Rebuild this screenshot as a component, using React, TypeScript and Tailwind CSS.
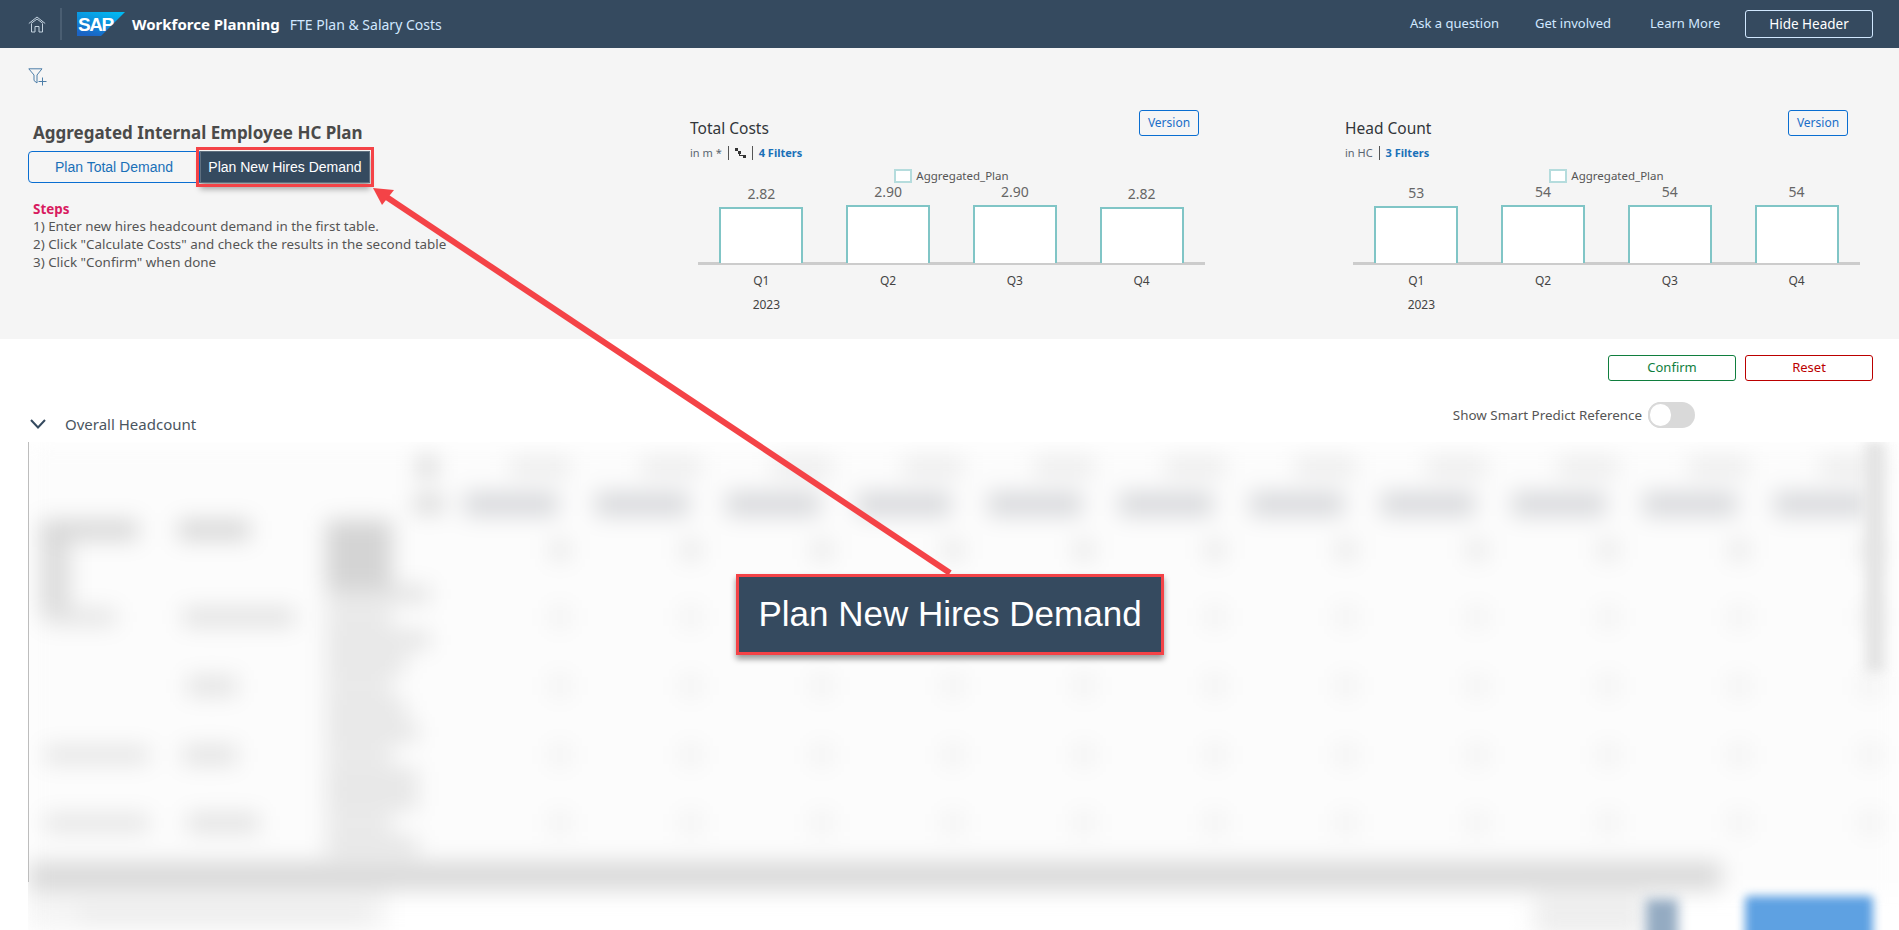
import React from "react";

const sans = "font-['Noto_Sans',sans-serif]";

function HomeIcon() {
  return (
    <svg width="18" height="17" viewBox="0 0 18 17" fill="none" stroke="#c3d2df" strokeWidth="1">
      <path d="M0.8 7.5 L9 1 L17.2 7.5" />
      <path d="M3 7.5 L9 3 L15 7.5" />
      <path d="M3.5 8 V16 H7 V10.5 H11 V16 H14.5 V8" />
    </svg>
  );
}

function SapLogo() {
  return (
    <svg width="48" height="24" viewBox="0 0 48 24">
      <defs>
        <linearGradient id="sapg" x1="0.3" y1="1" x2="0.8" y2="0">
          <stop offset="0" stopColor="#1b63c4" />
          <stop offset="1" stopColor="#00b9f2" />
        </linearGradient>
      </defs>
      <polygon points="0,0 48,0 24,24 0,24" fill="url(#sapg)" />
      <text x="1" y="19" fill="#fff" fontFamily="Liberation Sans, sans-serif" fontWeight="700" fontSize="19" letterSpacing="-1.4">
        SAP
      </text>
    </svg>
  );
}

function FilterPlus() {
  return (
    <svg width="21" height="18" viewBox="0 0 21 18" fill="none" stroke="#4d7ea8" strokeWidth="1">
      <path d="M0.8 0.8 H14 L9 7 V15 L6 12.5 V7 Z" />
      <path d="M14.5 9.5 V17.5 M10.5 13.5 H18.5" />
    </svg>
  );
}

function Hier() {
  return (
    <svg width="11" height="11" viewBox="0 0 11 11" fill="#333">
      <rect x="0" y="0" width="3" height="3" />
      <rect x="3" y="3" width="3" height="3" />
      <rect x="8" y="7" width="3" height="3" />
      <rect x="4" y="6" width="1" height="2" />
      <rect x="4" y="7" width="4" height="1" />
    </svg>
  );
}

function Chart({ title, sub, filters, hier, values, tops, wide }: { title: string; sub: string; filters: string; hier: boolean; values: string[]; tops: number[]; wide: boolean }) {
  return (
    <div className="flex flex-col">
      <div className={`flex justify-between items-start ${wide ? "w-[509px]" : "w-[503px]"}`}>
        <div className="flex flex-col">
          <div className="text-[15.5px] leading-[20px] mt-[8px] text-[#32363a]">{title}</div>
          <div className="flex items-center h-[14px] mt-[8px] text-[11px] text-[#5a6570]">
            <span>{sub}</span>
            {hier && (
              <>
                <span className="w-px h-[14px] bg-[#555] mx-[6px]" />
                <Hier />
              </>
            )}
            <span className="w-px h-[14px] bg-[#555] mx-[6px]" />
            <span className="font-bold text-[#1a70b8] text-[11px]">{filters}</span>
          </div>
        </div>
        <button className="w-[60px] h-[26px] border border-[#0a6ed1] rounded-[3px] text-[12px] text-[#1a6ec8] bg-transparent">Version</button>
      </div>
      <div className="ml-[8px] w-[507px]">
        <div className="flex justify-center items-center h-[14px] mt-[9px] gap-[4px] text-[11.5px] text-[#555]">
          <span className="w-[18px] h-[14px] border-2 border-[#b5dcdd] bg-white" />
          <span>Aggregated_Plan</span>
        </div>
        <div className="grid grid-cols-4 h-[82px] border-b-[3px] border-[#cccccc] items-end">
          {values.map((v, i) => (
            <div key={i} className="flex flex-col items-center">
              <span className="text-[14px] leading-[18px] mb-[4px] text-[#666]">{v}</span>
              <div className="w-[84px] border-2 border-b-0 border-[#80c5c6] bg-white" style={{ height: tops[i] }} />
            </div>
          ))}
        </div>
        <div className="grid grid-cols-4 mt-[8px] text-[12px] leading-[16px] text-[#444]">
          {["Q1", "Q2", "Q3", "Q4"].map((q) => (
            <div key={q} className="text-center">{q}</div>
          ))}
        </div>
        <div className="grid grid-cols-4 mt-[8px] text-[12px] leading-[16px] text-[#444]">
          <div className="text-center pl-[10px]">2023</div>
        </div>
      </div>
    </div>
  );
}

const pillCols = Array.from({ length: 11 });
const rows = [
  { h: 70, aw: 72, al: 16, bw: 112, bl: 5, cw: 104 },
  { h: 68, aw: 0, al: 16, bw: 50, bl: 9, cw: 80 },
  { h: 69, aw: 105, al: 16, bw: 54, bl: 5, cw: 92 },
  { h: 68, aw: 105, al: 16, bw: 72, bl: 9, cw: 92 },
];

function BlurredTable() {
  return (
    <div className="ml-[28px] relative h-[488px] overflow-hidden">
      <div className="blur-[11px] h-full bg-[#fcfcfc] flex flex-col">
        <div className="flex pl-[390px] h-[50px] items-center">
          <div className="w-[18px] h-[22px] bg-[#d6d6d6]" />
          <div className="flex gap-[71px] ml-[74px]">
            {pillCols.map((_, i) => (
              <div key={i} className="w-[60px] h-[18px] bg-[#ebebeb]" />
            ))}
          </div>
        </div>
        <div className="flex pl-[386px] h-[24px] items-center">
          <div className="w-[30px] h-[18px] bg-[#d8d8d8]" />
          <div className="flex gap-[37px] ml-[20px]">
            {pillCols.map((_, i) => (
              <div key={i} className="w-[94px] h-[24px] bg-[#d8d9dc]" />
            ))}
          </div>
        </div>
        <div className="flex h-[66px] pt-[4px]">
          <div className="w-[150px] pl-[12px] flex flex-col">
            <div className="w-[98px] h-[20px] bg-[#d6d6d6] shrink-0" />
            <div className="w-[30px] h-[76px] bg-[#dcdcdc] shrink-0" />
          </div>
          <div className="w-[146px] pl-[0px]">
            <div className="w-[72px] h-[20px] bg-[#d6d6d6]" />
          </div>
          <div className="w-[110px] pl-[2px]">
            <div className="w-[66px] h-[76px] bg-[#d4d4d4]" />
          </div>
          <div className="flex pl-[40px] gap-[35px] pt-[20px]">
            {pillCols.map((_, i) => (
              <div key={i} className="w-[96px] flex justify-end">
                <div className="w-[20px] h-[20px] bg-[#e8e8e8]" />
              </div>
            ))}
          </div>
        </div>
        {rows.map((r, k) => (
          <div key={k} className="flex items-center" style={{ height: r.h }}>
            <div className="w-[150px]" style={{ paddingLeft: r.al }}>
              <div className="h-[16px] bg-[#e2e2e2]" style={{ width: r.aw }} />
            </div>
            <div className="w-[146px]" style={{ paddingLeft: r.bl }}>
              <div className="h-[18px] bg-[#e0e0e0]" style={{ width: r.bw }} />
            </div>
            <div className="w-[110px] h-full flex flex-col justify-around pl-[2px]">
              <div className="h-[16px] bg-[#e0e0e0]" style={{ width: r.cw }} />
              <div className="w-[66px] h-[16px] bg-[#e2e2e2]" />
              <div className="h-[16px] bg-[#e0e0e0]" style={{ width: r.cw }} />
            </div>
            <div className="flex pl-[40px] gap-[35px]">
              {pillCols.map((_, i) => (
                <div key={i} className="w-[96px] flex justify-end">
                  <div className="w-[20px] h-[20px] bg-[#f0f0f0]" />
                </div>
              ))}
            </div>
          </div>
        ))}
        <div className="w-[1693px] h-[28px] bg-[#d8d8d8] mt-[5px]" />
        <div className="flex h-[40px] bg-white">
          <div className="w-[360px] h-full bg-[#f5f5f5] pt-[18px] pl-[50px]">
            <div className="w-[290px] h-[12px] bg-[#e8e8e8]" />
          </div>
          <div className="ml-[1146px] w-[112px] h-full mt-[6px] bg-[#eeeeee]" />
        </div>
      </div>
      <div className="absolute left-[1837px] top-0 w-[20px] h-[230px] bg-[#e4e4e4] blur-[6px]" />
      <div className="absolute left-[1618px] top-[457px] w-[32px] h-[50px] bg-[#94abc2] blur-[6px]" />
      <div className="absolute left-[1717px] top-[454px] w-[128px] h-[50px] bg-[#5ea1e2] rounded-[4px] blur-[5px]" />
      <div className="absolute left-0 top-0 w-px h-[440px] bg-[#bdbdbd]" />
    </div>
  );
}

export default function App() {
  return (
    <div className={`relative w-[1899px] h-[930px] overflow-hidden bg-white ${sans}`}>
      <header className="h-[48px] bg-[#354a5f] flex items-center pl-[28px] pr-[26px]">
        <HomeIcon />
        <div className="w-[2px] h-[32px] bg-[#4a5e72] ml-[14px] mr-[15px]" />
        <SapLogo />
        <span className="ml-[7px] text-[15px] font-bold text-white">Workforce Planning</span>
        <span className="ml-[10px] text-[14px] text-[#d1e8ff]">FTE Plan &amp; Salary Costs</span>
        <div className="ml-auto flex items-center text-[13px] text-[#d1e8ff]">
          <span className="w-[90px] whitespace-nowrap">Ask a question</span>
          <span className="ml-[35px] w-[77px] whitespace-nowrap">Get involved</span>
          <span className="ml-[38px] w-[70px] whitespace-nowrap">Learn More</span>
          <button className="ml-[25px] w-[128px] h-[28px] border border-[#d1e8ff] rounded-[3px] text-[#fff] text-[13.5px]">Hide Header</button>
        </div>
      </header>

      <section className="h-[291px] bg-[#f5f5f5] flex flex-col">
        <div className="pl-[28px] pt-[20px] h-[62px]">
          <FilterPlus />
        </div>
        <div className="flex">
          <div className="w-[690px] pl-[28px] pt-[11px]">
            <h1 className="pl-[5px] text-[17px] leading-[24px] font-bold text-[#4a4a4a]">Aggregated Internal Employee HC Plan</h1>
            <div className="flex mt-[6px] font-['Liberation_Sans',sans-serif] text-[14px]">
              <button className="w-[172px] h-[32px] border border-[#0a6ed1] rounded-l-[4px] text-[#1a70b8]">Plan Total Demand</button>
              <button className="w-[170px] h-[32px] bg-[#354a5f] text-white border border-[#5f6f7f] outline-[3px] outline-[#f44347] outline-offset-[1px] shadow-[0_6px_6px_rgba(0,0,0,0.35)]">Plan New Hires Demand</button>
            </div>
            <div className="pl-[5px] mt-[17px] text-[13.4px] leading-[18px] text-[#555]">
              <div className="font-bold text-[#d81b60]">Steps</div>
              <div className="-mt-px">1) Enter new hires headcount demand in the first table.</div>
              <div>2) Click "Calculate Costs" and check the results in the second table</div>
              <div>3) Click "Confirm" when done</div>
            </div>
          </div>
          <div className="w-[655px]">
            <Chart wide title="Total Costs" sub="in m *" hier filters="4 Filters" values={["2.82", "2.90", "2.90", "2.82"]} tops={[56, 58, 58, 56]} />
          </div>
          <Chart wide={false} title="Head Count" sub="in HC" hier={false} filters="3 Filters" values={["53", "54", "54", "54"]} tops={[57, 58, 58, 58]} />
        </div>
      </section>

      <div className="h-[103px] relative flex flex-col">
        <div className="flex justify-end gap-[9px] pr-[26px] pt-[16px] text-[13px]">
          <button className="w-[128px] h-[26px] border border-[#107e3e] rounded-[3px] text-[#107e3e]">Confirm</button>
          <button className="w-[128px] h-[26px] border border-[#bb0000] rounded-[3px] text-[#bb0000]">Reset</button>
        </div>
        <div className="flex items-start mt-[21px] pl-[30px] pr-[204px]">
          <div className="flex items-center h-[26px] mt-[9px]">
            <svg width="16" height="10" viewBox="0 0 16 10" fill="none" stroke="#354a5f" strokeWidth="2">
              <path d="M1 1 L8 8.5 L15 1" />
            </svg>
            <span className="ml-[19px] text-[15px] text-[#4a5560]">Overall Headcount</span>
          </div>
          <div className="ml-auto flex items-center h-[26px]">
            <span className="text-[13.4px] text-[#555]">Show Smart Predict Reference</span>
            <div className="ml-[6px] w-[47px] h-[26px] rounded-full bg-[#d9d9d9]">
              <div className="w-[25px] h-[26px] rounded-full bg-white border-2 border-[#d9d9d9]" />
            </div>
          </div>
        </div>
      </div>

      <BlurredTable />

      <svg className="absolute left-0 top-0 pointer-events-none" width="1899" height="930" fill="none">
        <line x1="950" y1="573" x2="385" y2="196" stroke="#f44347" strokeWidth="6" />
        <polygon points="373,188 394,190 382,205" fill="#f44347" />
      </svg>
      <div className="absolute left-[736px] top-[574px] w-[428px] h-[81px] border-[3px] border-[#f44347] bg-[#354a5f] text-white text-[35px] font-['Liberation_Sans',sans-serif] flex items-center justify-center shadow-[0_4px_6px_rgba(0,0,0,0.4)]">
        Plan New Hires Demand
      </div>
    </div>
  );
}
